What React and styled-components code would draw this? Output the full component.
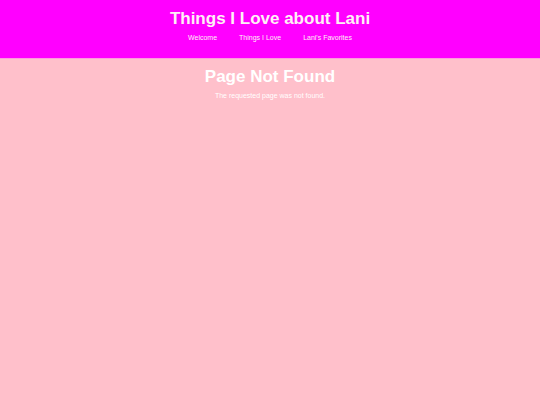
import React from 'react'
import styled, { createGlobalStyle } from 'styled-components'

const GlobalStyle = createGlobalStyle`
  body {
    margin: 0;
    background-color: pink;
    color: white;
    font-family: Arial, 'Liberation Sans', sans-serif;
    font-size: 7px;
    line-height: 8px;
    text-align: center;
  }
`

const Header = styled.header`
  background-color: magenta;
  border-bottom: 1px solid #ff99e0;
  color: lavenderblush;
  padding: 8px 8px 16px;
`

const Title = styled.h1`
  margin: 0;
  font-size: 17px;
  line-height: 21px;
`

const Nav = styled.nav`
  display: flex;
  justify-content: center;
  gap: 22px;
  margin-top: 5px;
`

const NavLink = styled.a`
  color: lavenderblush;
  text-decoration: none;

  &:hover {
    text-decoration: underline;
  }
`

const Main = styled.main`
  padding: 7px 8px;
`

const Message = styled.p`
  margin: 5px 0 0;
`

const links = [
  { href: '#welcome', label: 'Welcome' },
  { href: '#things', label: 'Things I Love' },
  { href: '#favorites', label: "Lani's Favorites" },
]

export default function App() {
  return (
    <>
      <GlobalStyle />
      <Header>
        <Title>Things I Love about Lani</Title>
        <Nav>
          {links.map(link => (
            <NavLink key={link.href} href={link.href}>{link.label}</NavLink>
          ))}
        </Nav>
      </Header>
      <Main>
        <Title>Page Not Found</Title>
        <Message>The requested page was not found.</Message>
      </Main>
    </>
  )
}
